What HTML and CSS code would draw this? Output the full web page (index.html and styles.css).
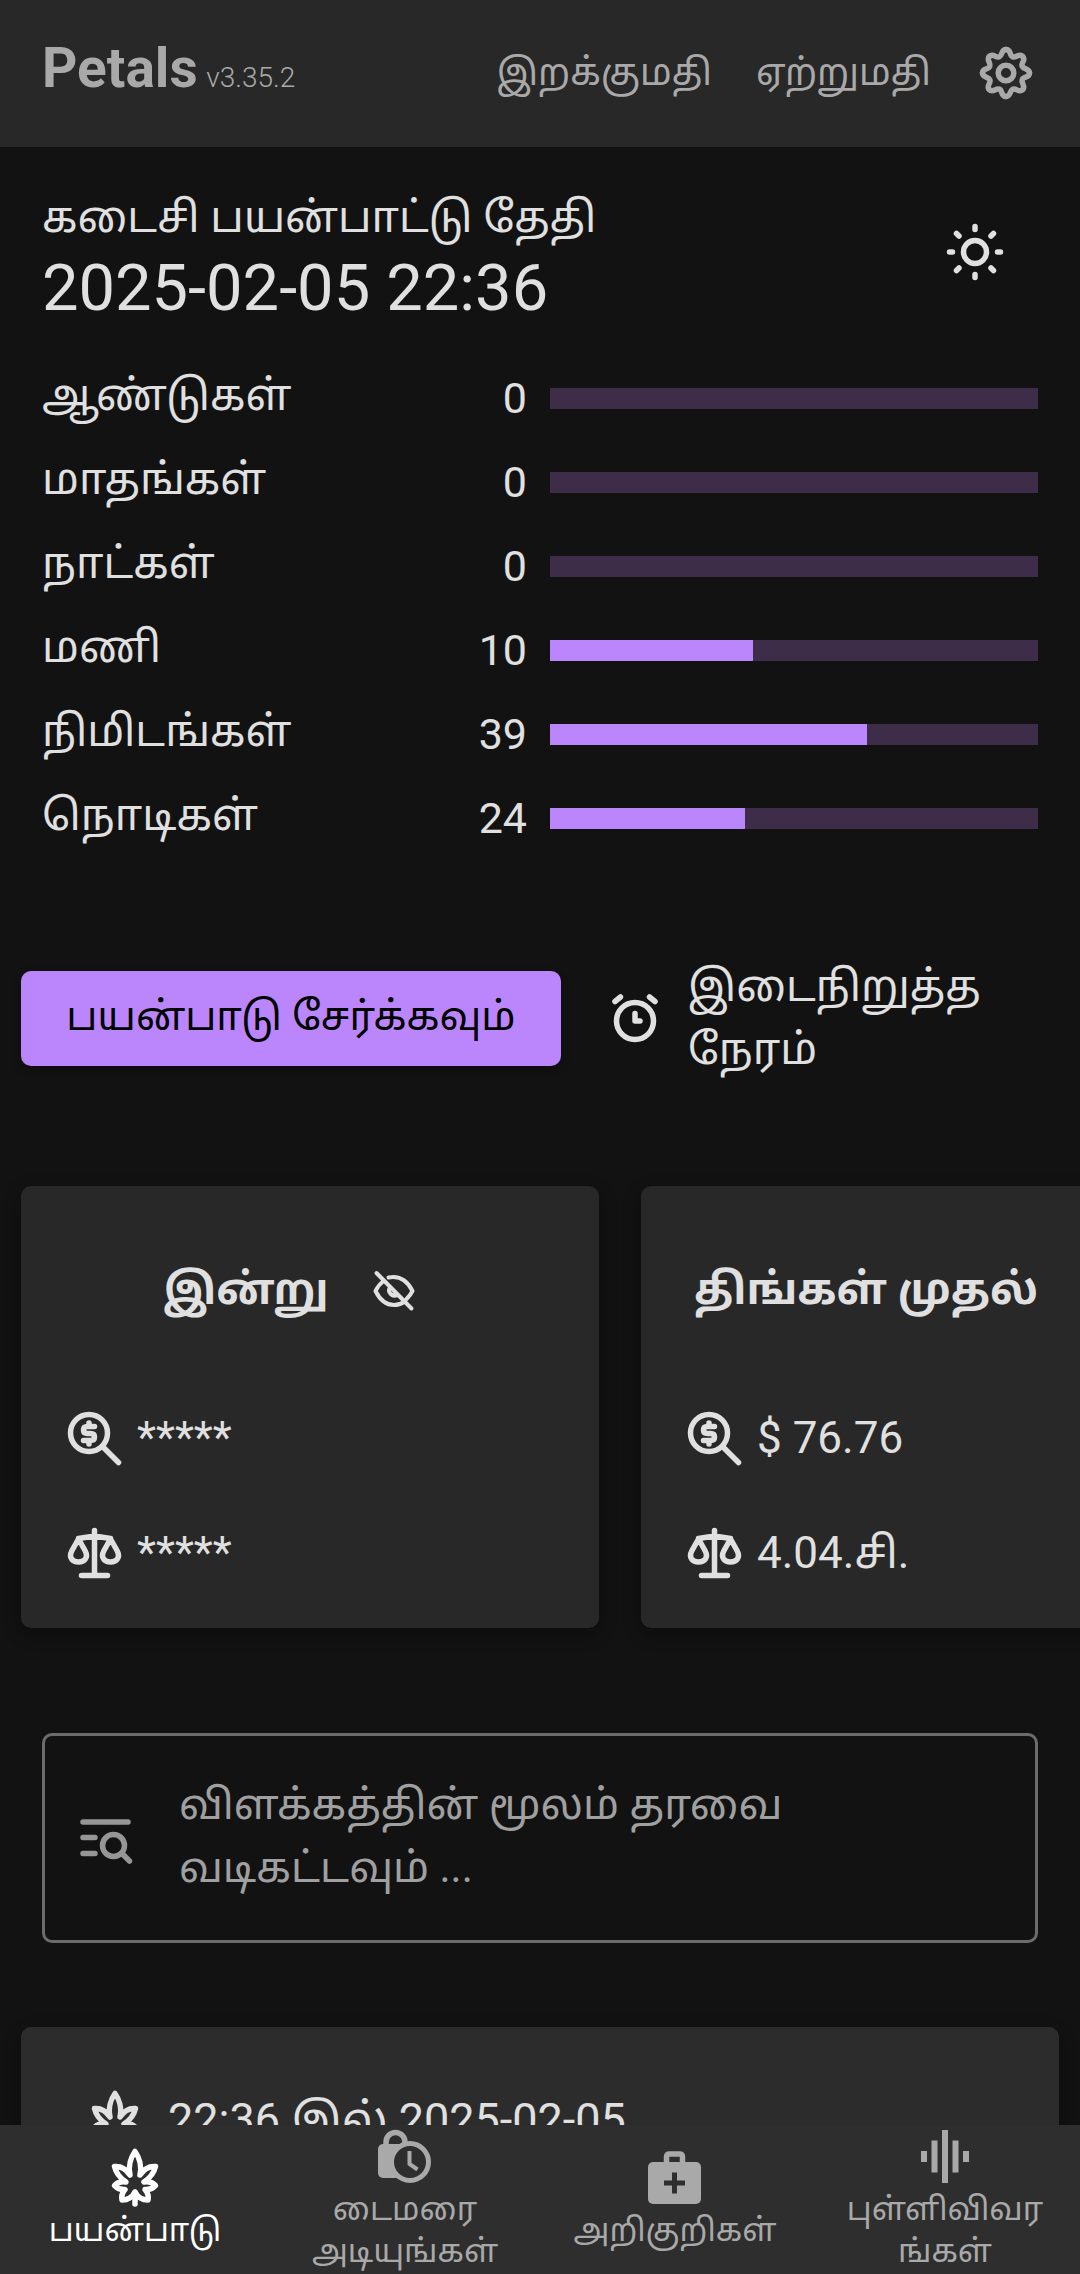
FILE: index.html
```html
<!DOCTYPE html>
<html lang="ta">
<head>
<meta charset="utf-8">
<meta name="viewport" content="width=device-width, initial-scale=1">
<title>Petals</title>
<link rel="stylesheet" href="styles.css">
</head>
<body>
<svg class="sprite" aria-hidden="true">
  <symbol id="leaf" viewBox="-7 -3 63 63">
    <path class="line" d="M24 2.500C28 8 31 17 29 26C33 20 39 17 44.500 17.500C43 24 39 29 33 33C38 32 42 33.500 44.500 36.500C41.500 39.500 38 41 34 40.500C37 44 38 47 37 51C31 51 27 49 24 43C21 49 17 51 11 51C10 47 11 44 14 40.500C10 41 6.500 39.500 3.500 36.500C6 33.500 10 32 15 33C9 29 5 24 3.500 17.500C9 17 15 20 19 26C17 17 20 8 24 2.500ZM24 43V55"/>
  </symbol>
  <symbol id="gear" viewBox="-5 -5 63 63">
    <g class="line" id="gear-shape">
      <path id="lobe" d="M26 2.500C31.500 2.500 29 8.500 32.700 9.800S39.100 5.900 42.600 9.400"/>
      <use href="#lobe" transform="rotate(45 26 26)"/><use href="#lobe" transform="rotate(90 26 26)"/>
      <use href="#lobe" transform="rotate(135 26 26)"/><use href="#lobe" transform="rotate(180 26 26)"/>
      <use href="#lobe" transform="rotate(225 26 26)"/><use href="#lobe" transform="rotate(270 26 26)"/>
      <use href="#lobe" transform="rotate(315 26 26)"/><circle cx="26" cy="26" r="7.800"/>
    </g>
  </symbol>
  <symbol id="price" viewBox="-5 -5 63 63">
    <path class="line" d="M35.500 35.500L50.500 50.500"/><circle class="line" cx="21" cy="21" r="18.500"/>
    <path class="line" d="M26.500 14.500H19.500Q15.500 14.500 15.500 18T19.500 21.500H22.500Q26.500 21.500 26.500 25T22.500 28.500H15.500M21 11V14M21 29V32"/>
  </symbol>
  <symbol id="scale" viewBox="-5 -6 63 63">
    <path class="line" d="M26.500 2.500V47.500M13.500 47.500H39.500M10.500 10.500L26.500 8L42.500 10.500M10.500 11L4 22.500C0 30 5 34 10.500 34S21 30 17 22.500ZM42.500 11L36 22.500C32 30 37 34 42.500 34S53 30 49 22.500Z"/>
  </symbol>
  <symbol id="eye-off" viewBox="-2 -6 50 50">
    <path class="line thin" d="M10 10.500C6 13.500 4 17 2.500 20C7 29 14 34 21 34C25 34 28 33 31 31M15.500 6.500C28 4 35 11 39.500 20C38 23 36 25.500 33.500 28M17 16.500C14 21 19.500 27 24.500 23.500M3.500 2L38.500 37.500"/>
  </symbol>
</svg>

<header class="top">
  <h1 class="brand">Petals <small class="version">v3.35.2</small></h1>
  <button class="bar-button" type="button">இறக்குமதி</button>
  <button class="bar-button" type="button">ஏற்றுமதி</button>
  <button class="icon-button" type="button" aria-label="அமைப்புகள்"><svg class="icon"><use href="#gear"/></svg></button>
</header>

<main class="page">
  <section class="last">
    <div>
      <h2 class="last-title">கடைசி பயன்பாட்டு தேதி</h2>
      <p class="last-date">2025-02-05 22:36</p>
    </div>
    <button class="theme-button" type="button" aria-label="ஒளி கருப்பொருள்">
      <svg class="icon" viewBox="-31 -30 63 63"><g class="line"><circle r="11.500"/><path d="M0-25.500V-22.500M0 25.500V22.500M-25.500 0H-22.500M25.500 0H22.500M-18.500-18.500L-16-16M18.500-18.500L16-16M-18.500 18.500L-16 16M18.500 18.500L16 16"/></g></svg>
    </button>
  </section>

  <section class="counters">
    <div class="counter"><label for="years">ஆண்டுகள்</label><span class="value">0</span><progress id="years" max="10" value="0"></progress></div>
    <div class="counter"><label for="months">மாதங்கள்</label><span class="value">0</span><progress id="months" max="12" value="0"></progress></div>
    <div class="counter"><label for="days">நாட்கள்</label><span class="value">0</span><progress id="days" max="31" value="0"></progress></div>
    <div class="counter"><label for="hours">மணி</label><span class="value">10</span><progress id="hours" max="24" value="10"></progress></div>
    <div class="counter"><label for="minutes">நிமிடங்கள்</label><span class="value">39</span><progress id="minutes" max="60" value="39"></progress></div>
    <div class="counter"><label for="seconds">நொடிகள்</label><span class="value">24</span><progress id="seconds" max="60" value="24"></progress></div>
  </section>

  <section class="actions">
    <button class="primary" type="button">பயன்பாடு சேர்க்கவும்</button>
    <button class="pause" type="button">
      <svg class="icon" viewBox="-32 -34 63 63"><g class="line"><circle r="18.500"/><path d="M-20-19.500L-14.500-24M20-19.500L14.500-24M0-7.500V0H5"/></g></svg>
      <span>இடைநிறுத்த நேரம்</span>
    </button>
  </section>

  <section class="cards">
    <article class="card">
      <h3 class="card-title">இன்று <button class="eye" type="button" aria-label="மறை"><svg class="icon-small"><use href="#eye-off"/></svg></button></h3>
      <p class="stat"><svg class="icon"><use href="#price"/></svg>*****</p>
      <p class="stat"><svg class="icon"><use href="#scale"/></svg>*****</p>
    </article>
    <article class="card">
      <h3 class="card-title">திங்கள் முதல் <button class="eye" type="button" aria-label="மறை"><svg class="icon-small"><use href="#eye-off"/></svg></button></h3>
      <p class="stat"><svg class="icon"><use href="#price"/></svg>$ 76.76</p>
      <p class="stat"><svg class="icon"><use href="#scale"/></svg>4.04.சி.</p>
    </article>
  </section>

  <label class="search">
    <svg class="icon" viewBox="-1 1 63 63"><path class="line" d="M8 18H53M8 33.500H20M8 49.500H20M47 49.500L54.500 57"/><circle class="line" cx="38.500" cy="41.500" r="11"/></svg>
    <textarea rows="2" aria-label="வடிகட்டி" placeholder="விளக்கத்தின் மூலம் தரவை வடிகட்டவும் ..."></textarea>
  </label>

  <article class="entry">
    <p class="entry-line"><svg class="icon"><use href="#leaf"/></svg>22:36 இல் 2025-02-05</p>
  </article>
</main>

<nav class="tabs">
  <a class="tab active" href="#usage"><svg class="icon"><use href="#leaf"/></svg><span>பயன்பாடு</span></a>
  <a class="tab" href="#timer">
    <svg class="icon" viewBox="-4 -5 63 63"><rect y="14" width="34" height="34" rx="5" fill="currentColor"/><path class="line" d="M8 15V12A9.500 9.500 0 0 1 27 12V15"/><circle class="hollow" cx="32" cy="32" r="18.500"/><path class="hand" d="M31.500 21V34L39.500 39.500"/></svg>
    <span>டைமரை அடியுங்கள்</span></a>
  <a class="tab" href="#symptoms">
    <svg class="icon" viewBox="-4 -5 63 63"><rect y="11" width="53" height="42" rx="5" fill="currentColor"/><path class="line" d="M18.500 12V6Q18.500 3 21.500 3H31.500Q34.500 3 34.500 6V12"/><path class="plus" d="M16 32H37M26.500 21.500V42.500"/></svg>
    <span>அறிகுறிகள்</span></a>
  <a class="tab" href="#stats">
    <svg class="icon" viewBox="-7 -5 63 63"><path fill="currentColor" d="M0 21H6V32H0ZM10.500 10.500H16.500V42.500H10.500ZM21 0H27V53H21ZM31.500 10.500H37.500V42.500H31.500ZM42 21H48V32H42Z"/></svg>
    <span>புள்ளிவிவர<wbr>ங்கள்</span></a>
</nav>
</body>
</html>
```
FILE: styles.css
```css
* { box-sizing: border-box; margin: 0; }

body {
  display: flex;
  flex-direction: column;
  height: 100vh;
  overflow: hidden;
  background: #121212;
  color: #e0e0e0;
  font: 43px/63px Roboto, "Noto Sans Tamil", "Noto Sans", sans-serif;
}

button {
  padding: 0;
  border: 0;
  background: none;
  color: inherit;
  font: inherit;
  cursor: pointer;
}

.sprite { position: absolute; width: 0; height: 0; }
.icon { flex: none; display: block; width: 63px; height: 63px; }
.icon-small { display: block; width: 50px; height: 50px; }
.line {
  fill: none;
  stroke: currentColor;
  stroke-width: 5.5px;
  stroke-linecap: round;
  stroke-linejoin: round;
}
.thin { stroke-width: 4px; }

.top {
  flex: none;
  display: flex;
  align-items: center;
  gap: 44px;
  height: 147px;
  padding: 0 42px;
  background: #282828;
  color: #a9a9a9;
}
.brand { margin-right: auto; padding-bottom: 2px; font-size: 55px; font-weight: 700; }
.version { margin-left: -5px; font-size: 28px; font-weight: 300; }
.bar-button { padding-bottom: 2px; font-size: 37px; }

.page {
  flex: 1;
  min-height: 0;
  overflow-y: auto;
  scrollbar-width: none;
  padding-top: 35px;
}

.last {
  display: flex;
  justify-content: space-between;
  align-items: center;
  padding: 0 73px 0 42px;
}
.last-title { font-size: 43px; font-weight: 400; line-height: 70px; }
.last-date { font-size: 65px; line-height: 72px; }

.counters { padding: 32px 42px 0; }
.counter { display: flex; align-items: center; height: 84px; }
.counter label { flex: 1; padding-bottom: 6px; }
.value { flex: none; width: 90px; padding-right: 23px; text-align: right; }
progress {
  appearance: none;
  width: 49%;
  height: 21px;
  border: 0;
  background: #3e2d49;
}
progress::-webkit-progress-bar { background: #3e2d49; }
progress::-webkit-progress-value { background: #bb86fc; }

.actions {
  display: flex;
  align-items: center;
  gap: 42px;
  padding: 95px 21px 0;
}
.primary {
  flex: none;
  min-width: 52%;
  height: 95px;
  padding: 0 32px 4px;
  border-radius: 10px;
  background: #bb86fc;
  color: #000;
  font-size: 40px;
  white-space: nowrap;
  box-shadow: 0 4px 8px #0004;
}
.pause {
  display: flex;
  align-items: center;
  gap: 22px;
  text-align: left;
}

.cards {
  display: flex;
  gap: 42px;
  overflow-x: auto;
  scrollbar-width: none;
  padding: 105px 21px;
}
.card {
  flex: none;
  width: 578px;
  height: 442px;
  padding: 42px;
  border-radius: 10px;
  background: #282828;
  box-shadow: 0 6px 18px #0005;
}
.card-title {
  display: flex;
  justify-content: center;
  align-items: center;
  gap: 6px;
  height: 123px;
  margin-bottom: 30px;
  font-size: 43px;
  font-weight: 700;
  white-space: nowrap;
}
.eye { display: grid; place-items: center; width: 122px; }
.stat { display: flex; align-items: center; gap: 11px; height: 115px; font-size: 44px; }

.search {
  display: flex;
  align-items: center;
  gap: 42px;
  margin: 0 42px;
  padding: 37px 29px 41px;
  border: 3px solid #6c6c6c;
  border-radius: 10px;
  color: #969696;
  font-size: 42px;
}
textarea {
  display: block;
  flex: 1;
  height: 126px;
  padding: 0;
  border: 0;
  outline: 0;
  resize: none;
  overflow: hidden;
  background: none;
  color: #e0e0e0;
  font: inherit;
}
textarea::placeholder { color: #a0a0a0; }

.entry {
  min-height: 260px;
  margin: 84px 21px 0;
  padding: 61px 63px;
  border-radius: 10px;
  background: #2c2c2c;
  box-shadow: 0 6px 18px #0005;
}
.entry-line { display: flex; align-items: center; gap: 21px; font-size: 45px; }

.tabs {
  flex: none;
  display: grid;
  grid-template-columns: repeat(4, 1fr);
  min-height: 149px;
  background: #2e2e2e;
}
.tab {
  display: flex;
  flex-direction: column;
  align-items: center;
  justify-content: center;
  padding: 0 32px 2px;
  color: #a9a9a9;
  font-size: 32px;
  line-height: 42px;
  text-align: center;
  text-decoration: none;
}
.active { color: #fff; }
.hollow { fill: #2e2e2e; stroke: currentColor; stroke-width: 5px; }
.hand { fill: none; stroke: currentColor; stroke-width: 4px; }
.plus { stroke: #2e2e2e; stroke-width: 5px; }
```
